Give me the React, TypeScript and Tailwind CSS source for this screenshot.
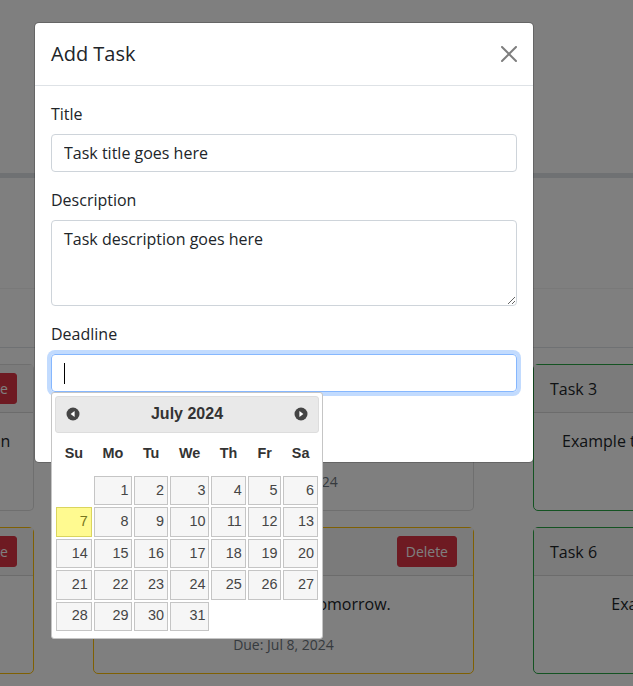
import React from "react";

type Tone = "neutral" | "warning" | "success";

type Task = {
  title: string;
  body: string;
  due: string;
  tone: Tone;
};

const columns: Task[][] = [
  [
    { title: "Task 1", body: "Example task with a much longer description", due: "Due: Jul 5, 2024", tone: "neutral" },
    { title: "Task 4", body: "Example task that is due soon", due: "Due: Jul 9, 2024", tone: "warning" },
  ],
  [
    { title: "Task 2", body: "Example task description", due: "Due: Jul 10, 2024", tone: "neutral" },
    { title: "Task 5", body: "Example task due tomorrow.", due: "Due: Jul 8, 2024", tone: "warning" },
  ],
  [
    { title: "Task 3", body: "Example task that was completed last week", due: "Due: Jul 3, 2024", tone: "success" },
    { title: "Task 6", body: "Example task for the weekend", due: "Due: Jul 15, 2024", tone: "success" },
  ],
];

const toneBorder: Record<Tone, string> = {
  neutral: "border-black/[0.125]",
  warning: "border-[#ffc107]",
  success: "border-[#28a745]",
};

const TaskCard = ({ task }: { task: Task }) => {
  return (
    <div className={`rounded-[5px] border bg-white ${toneBorder[task.tone]}`}>
      <div className="flex items-center justify-between border-b border-black/[0.125] bg-[#f7f7f7] px-4 py-2">
        <span className="leading-6">{task.title}</span>
        <button className="rounded-[3px] border border-[#dc3545] bg-[#dc3545] px-2 py-1 text-[14px] leading-[21px] text-white">
          Delete
        </button>
      </div>
      <div className="p-4 text-center">
        <p className="mb-4 leading-6">{task.body}</p>
        <p className="leading-6">
          <small className="text-[14px] text-[#6c757d]">{task.due}</small>
        </p>
      </div>
    </div>
  );
};

const Board = () => {
  return (
    <div>
      <div className="h-[173px]" />
      <div className="h-[5px] bg-[#dee2e6]" />
      <div className="h-[111px] border-b border-[#f2f2f2]" />
      <div className="h-[59px] border-b border-[#dee2e6]" />
      <div className="ml-[-347px] flex gap-[59px] pt-4">
        {columns.map((col, i) => (
          <div key={i} className="flex w-[381px] shrink-0 flex-col gap-4">
            {col.map((task) => (
              <TaskCard key={task.title} task={task} />
            ))}
          </div>
        ))}
      </div>
    </div>
  );
};

const NavIcon = ({ dir }: { dir: "prev" | "next" }) => (
  <svg width="16" height="16" viewBox="0 0 16 16">
    <circle cx="8" cy="8" r="6.5" fill="#454545" />
    {dir === "prev" ? (
      <polygon points="9.6,5 5.6,8 9.6,11" fill="#fff" />
    ) : (
      <polygon points="6.4,5 10.4,8 6.4,11" fill="#fff" />
    )}
  </svg>
);

const weeks: (number | null)[][] = [
  [null, 1, 2, 3, 4, 5, 6],
  [7, 8, 9, 10, 11, 12, 13],
  [14, 15, 16, 17, 18, 19, 20],
  [21, 22, 23, 24, 25, 26, 27],
  [28, 29, 30, 31, null, null, null],
];

const Datepicker = () => {
  return (
    <div className="absolute left-0 top-full z-10 w-[272px] rounded-[3px] border border-[#c5c5c5] bg-white px-[3.2px] pt-[3.2px] font-['Liberation_Sans',Arial,sans-serif] text-[16px] leading-[1.5] text-[#333]">
      <div className="relative rounded-[3px] border border-[#dddddd] bg-[#e9e9e9] py-[3.2px] font-bold text-[#333]">
        <a className="absolute left-[2px] top-[2px] flex h-[28.8px] w-[28.8px] items-center justify-center">
          <NavIcon dir="prev" />
        </a>
        <div className="mx-[36.8px] text-center leading-[28.8px]">July 2024</div>
        <a className="absolute right-[2px] top-[2px] flex h-[28.8px] w-[28.8px] items-center justify-center">
          <NavIcon dir="next" />
        </a>
      </div>
      <table className="mb-[5.76px] w-full border-collapse text-[14.4px] leading-[1.5]">
        <thead>
          <tr>
            {["Su", "Mo", "Tu", "We", "Th", "Fr", "Sa"].map((d) => (
              <th key={d} className="px-[4.32px] py-[10.08px] text-center font-bold">
                {d}
              </th>
            ))}
          </tr>
        </thead>
        <tbody>
          {weeks.map((week, wi) => (
            <tr key={wi}>
              {week.map((day, di) => (
                <td key={di} className="p-px">
                  {day !== null && (
                    <a
                      className={
                        day === 7
                          ? "block border border-[#dad55e] bg-[#fffa90] p-[2.88px] text-right text-[#777620]"
                          : "block border border-[#c5c5c5] bg-[#f6f6f6] p-[2.88px] text-right text-[#454545]"
                      }
                    >
                      {day}
                    </a>
                  )}
                </td>
              ))}
            </tr>
          ))}
        </tbody>
      </table>
    </div>
  );
};

const AddTaskModal = () => {
  return (
    <div className="absolute left-[34px] top-[22px] w-[500px] rounded-[5px] border border-black/20 bg-white bg-clip-padding">
      <div className="flex items-center justify-between border-b border-[#dee2e6] p-4">
        <h5 className="text-[20px] font-medium leading-[30px]">Add Task</h5>
        <button className="opacity-50">
          <svg width="16" height="16" viewBox="0 0 16 16" className="block">
            <path
              fill="#000"
              d="M.293.293a1 1 0 0 1 1.414 0L8 6.586 14.293.293a1 1 0 1 1 1.414 1.414L9.414 8l6.293 6.293a1 1 0 0 1-1.414 1.414L8 9.414l-6.293 6.293a1 1 0 0 1-1.414-1.414L6.586 8 .293 1.707a1 1 0 0 1 0-1.414z"
            />
          </svg>
        </button>
      </div>
      <div className="p-4">
        <div className="mb-4">
          <label className="mb-2 block leading-6">Title</label>
          <input
            className="block h-[38px] w-full rounded-[4px] border border-[#ced4da] px-3 leading-6 text-[#212529] outline-none"
            defaultValue="Task title goes here"
          />
        </div>
        <div className="mb-4">
          <label className="mb-2 block leading-6">Description</label>
          <textarea
            rows={3}
            className="block h-[86px] w-full rounded-[4px] border border-[#ced4da] px-3 py-[6px] leading-6 text-[#212529] outline-none"
            defaultValue="Task description goes here"
          />
        </div>
        <div className="relative mb-4">
          <label className="mb-2 block leading-6">Deadline</label>
          <div className="flex h-[38px] w-full items-center rounded-[4px] border border-[#86b7fe] px-3 shadow-[0_0_0_4px_rgba(13,110,253,0.25)]">
            <span className="h-[21px] w-px bg-black" />
          </div>
          <Datepicker />
        </div>
        <button className="h-[38px] rounded-[4px] border border-[#0d6efd] bg-[#0d6efd] px-3 leading-6 text-white">
          Add Task
        </button>
      </div>
    </div>
  );
}

export default function App() {
  return (
    <div className="relative h-[686px] w-[633px] overflow-hidden bg-white font-['Open_Sans',sans-serif] text-[16px] text-[#212529]">
      <Board />
      <div className="absolute inset-0 bg-black/50" />
      <AddTaskModal />
    </div>
  );
}
